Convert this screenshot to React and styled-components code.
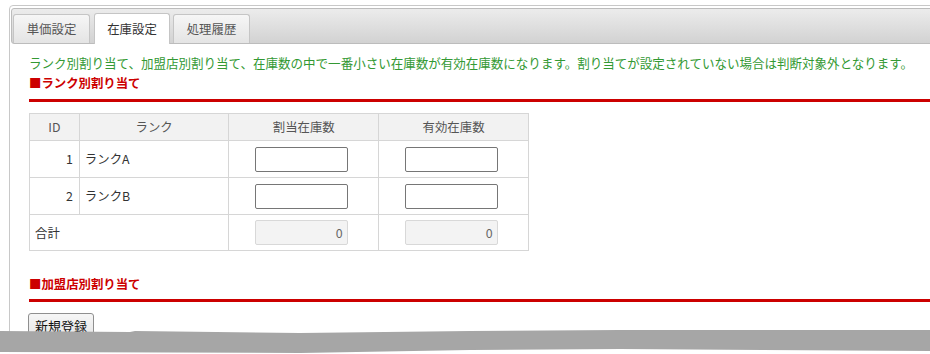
import React from 'react';
import styled, { createGlobalStyle } from 'styled-components';

const GlobalStyle = createGlobalStyle`
    * { box-sizing: border-box; }
    body {
        margin: 0;
        background: #fff;
        overflow: hidden;
        font-family: "Noto Sans CJK JP", "Noto Sans", sans-serif;
        font-size: 12.4px;
        color: #333;
    }
`;

const rows = [
    { id: 1, name: 'ランクA' },
    { id: 2, name: 'ランクB' },
];

const App = () => {
    return (
        <Page>
            <GlobalStyle />
            <Widget>
                <TabNav>
                    <Tab>単価設定</Tab>
                    <Tab active>在庫設定</Tab>
                    <Tab>処理履歴</Tab>
                </TabNav>
                <Panel>
                    <Note>ランク別割り当て、加盟店別割り当て、在庫数の中で一番小さい在庫数が有効在庫数になります。割り当てが設定されていない場合は判断対象外となります。</Note>
                    <Heading>■ランク別割り当て</Heading>
                    <Grid>
                        <thead>
                            <tr>
                                <Th width={50}>ID</Th>
                                <Th width={150}>ランク</Th>
                                <Th width={150}>割当在庫数</Th>
                                <Th width={150}>有効在庫数</Th>
                            </tr>
                        </thead>
                        <tbody>
                            {rows.map(r => (
                                <tr key={r.id}>
                                    <Td align="right">{r.id}</Td>
                                    <Td>{r.name}</Td>
                                    <Td align="center"><Field /></Td>
                                    <Td align="center"><Field /></Td>
                                </tr>
                            ))}
                            <tr>
                                <Td colSpan={2} short>合計</Td>
                                <Td align="center" short><Field disabled value="0" readOnly /></Td>
                                <Td align="center" short><Field disabled value="0" readOnly /></Td>
                            </tr>
                        </tbody>
                    </Grid>
                    <Heading second>■加盟店別割り当て</Heading>
                    <Button>新規登録</Button>
                </Panel>
            </Widget>
            <Tear viewBox="0 0 930 28" preserveAspectRatio="none">
                <polygon points="0,28 0,26 300,27 470,24 620,23 930,25 930,28" fill="#fff" />
                <polygon points="0,5 130,6 135,5 300,7 470,5 620,4 930,4 930,25 620,23 470,24 300,27 0,26" fill="#a6a6a6" />
            </Tear>
        </Page>
    );
};

const Page = styled.div`
    position: relative;
    height: 354px;
    padding: 5px 0 0 9px;
`

const Widget = styled.div`
    width: 960px;
    height: 360px;
    border: 1px solid #c8c8c8;
    border-radius: 4px;
    padding: 2px 1px 0 1px;
    background: #fff;
`

const TabNav = styled.div`
    display: flex;
    align-items: flex-end;
    gap: 3px;
    height: 36px;
    padding: 0 2px 0 1px;
    border: 1px solid #bcbcbc;
    border-radius: 3px;
    background: linear-gradient(#ececec, #d2d2d2);
`

const Tab = styled.div`
    display: flex;
    align-items: center;
    justify-content: center;
    width: ${p => (p.active ? '76px' : '77px')};
    height: ${p => (p.active ? '31px' : '29px')};
    margin-bottom: ${p => (p.active ? '-1px' : '0')};
    margin-left: ${p => (p.active ? '1px' : '0')};
    border: 1px solid #c5c5c5;
    border-bottom: none;
    border-radius: 3px 3px 0 0;
    background: ${p => (p.active ? '#fff' : 'linear-gradient(#f6f6f6, #e4e4e4)')};
    color: ${p => (p.active ? '#333' : '#555')};
    position: relative;
    z-index: ${p => (p.active ? 1 : 0)};
`

const Panel = styled.div`
    padding: 10px 0 0 18px;
`

const Note = styled.p`
    margin: 0;
    line-height: 18px;
    font-size: 12.52px;
    color: #339933;
    white-space: nowrap;
`

const Heading = styled.h3`
    margin: ${p => (p.second ? '24px' : '2px')} 0 0 0;
    padding-bottom: ${p => (p.second ? '6px' : '7px')};
    line-height: 18px;
    font-size: 12.4px;
    font-weight: bold;
    color: #cc0000;
    border-bottom: 3px solid #cc0000;
`

const Grid = styled.table`
    margin-top: 11px;
    border-collapse: collapse;
    width: 500px;
`

const Th = styled.th`
    width: ${p => p.width}px;
    height: 27px;
    padding: 0;
    border: 1px solid #d6d6d6;
    background: #f2f2f2;
    font-weight: normal;
    color: #555;
`

const Td = styled.td`
    height: ${p => (p.short ? '36px' : '37px')};
    padding: 0 6px 0 5px;
    border: 1px solid #d6d6d6;
    text-align: ${p => p.align || 'left'};
    color: #333;
`

const Field = styled.input`
    display: inline-block;
    vertical-align: middle;
    width: 93px;
    height: 25px;
    margin-right: 4px;
    padding: 0 4px;
    border: 1px solid ${p => (p.disabled ? '#d8d8d8' : '#767676')};
    border-radius: 2px;
    background: ${p => (p.disabled ? '#f3f3f3' : '#fff')};
    font: inherit;
    color: #666;
    text-align: right;
`

const Button = styled.button`
    margin-top: 11px;
    margin-left: -1px;
    height: 25px;
    padding: 0 6px;
    border: 1px solid #8f8f8f;
    border-radius: 3px;
    background: linear-gradient(#f6f6f6, #e6e6e6);
    font: inherit;
    font-size: 13px;
    color: #111;
`

const Tear = styled.svg`
    position: absolute;
    left: 0;
    top: 326px;
    width: 930px;
    height: 28px;
    pointer-events: none;
`

export default App;
